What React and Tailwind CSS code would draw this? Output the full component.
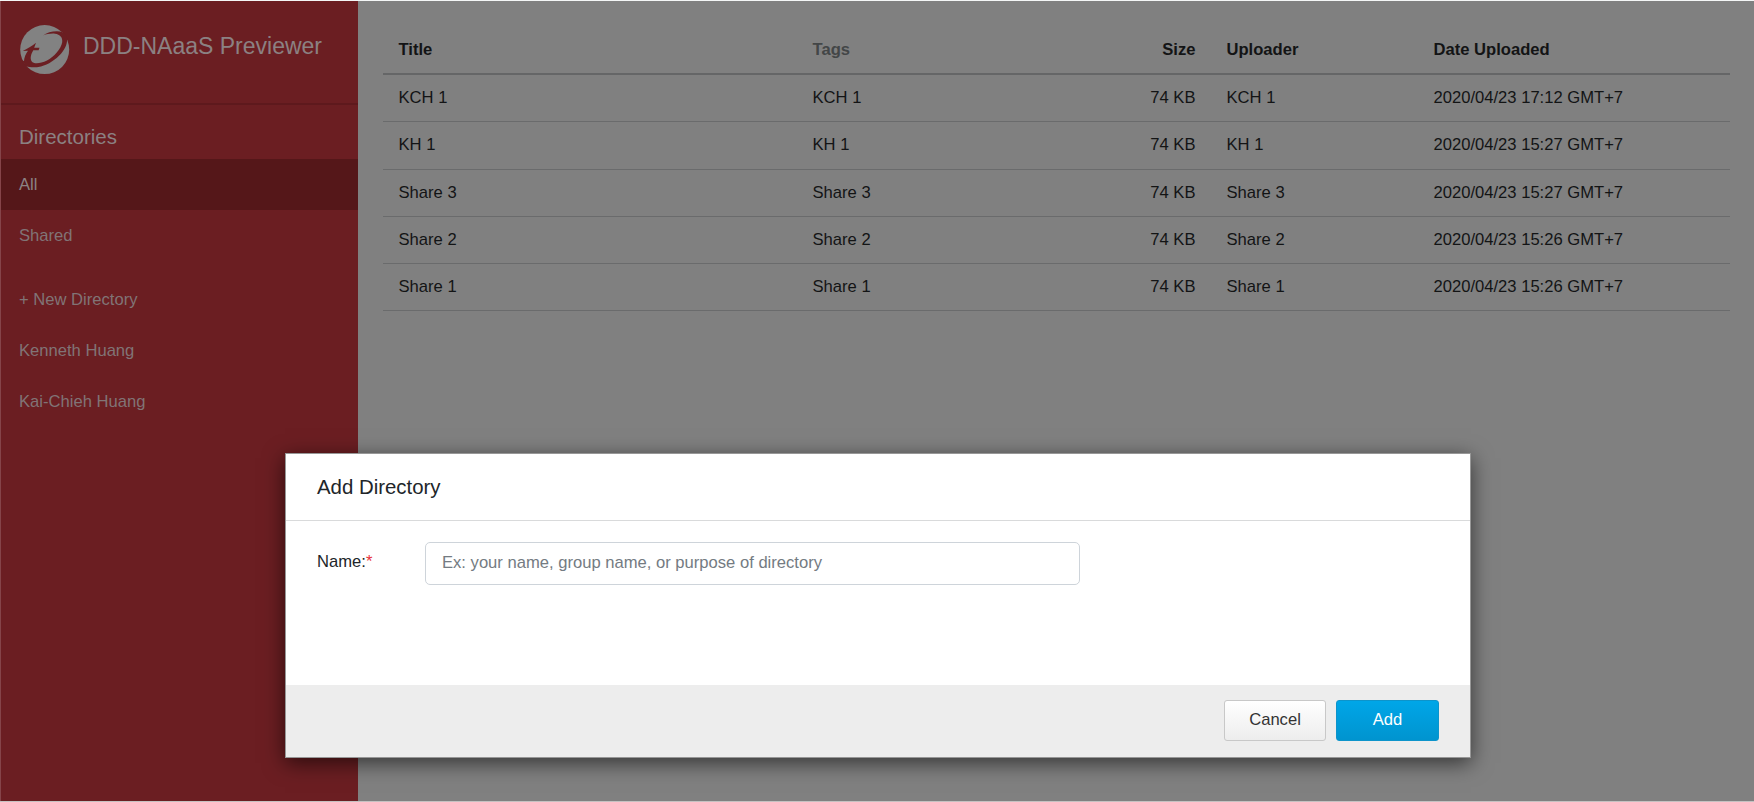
import React from "react";

const rows = [
  ["KCH 1", "2020/04/23 17:12 GMT+7"],
  ["KH 1", "2020/04/23 15:27 GMT+7"],
  ["Share 3", "2020/04/23 15:27 GMT+7"],
  ["Share 2", "2020/04/23 15:26 GMT+7"],
  ["Share 1", "2020/04/23 15:26 GMT+7"],
];

const grid = "grid grid-cols-[414px_207px_207px_207px_1fr]";

function Logo() {
  return (
    <svg className="h-[51px] w-[50px] shrink-0" viewBox="0 0 50 51">
      <circle cx="24.7" cy="25.6" r="24.5" fill="#828282" />
      <path
        d="M22.8 11.4C28 8 36.5 6.2 42.5 8.2L45.5 10.5L46.8 12.5C48 18.5 45.5 24.5 41.2 29.5C35.5 35.8 28.5 40.5 21 42.4C15 43.8 10 43.4 6.5 42.5L1.5 36.5L4 37C4.2 33.5 5.6 30 8 26.7L2.8 27C8 24.3 12.3 22 16 18.8L14.2 23.8H19.5L18.6 26.3H13.3C11.1 30 9.8 34.2 11.6 37.2C13.7 40.2 20 39.8 27 36.5C34 32.7 41 25 42.2 18.2C42.9 13.2 40 10.4 35 9.7C31 9.3 26.5 10.2 22.8 11.4Z"
        fill="#6b1e22"
      />
    </svg>
  );
}

function SideItem({ children, active }) {
  return (
    <div className={"flex h-[51px] items-center pt-[2px] pl-[18px] " + (active ? "bg-[#551719] text-[#8c8384]" : "")}>
      {children}
    </div>
  );
}

function Sidebar() {
  return (
    <aside className="w-[358px] shrink-0 border-l border-[#854449] bg-[#6b1e22] text-[16.6px] text-[#817476]">
      <div className="flex h-[104px] gap-[13px] border-b-2 border-[#5e191d] pt-[23px] pl-[19px]">
        <Logo />
        <h1 className="mt-[5px] text-[23px] leading-[34px] whitespace-nowrap text-[#8b8182]">DDD-NAaaS Previewer</h1>
      </div>
      <h2 className="h-[54px] pt-[16px] pl-[18px] text-[20.5px] leading-[32px] text-[#8b8182]">Directories</h2>
      <SideItem active>All</SideItem>
      <SideItem>Shared</SideItem>
      <div className="mt-[13px]">
        <SideItem>+ New Directory</SideItem>
        <SideItem>Kenneth Huang</SideItem>
        <SideItem>Kai-Chieh Huang</SideItem>
      </div>
    </aside>
  );
}

function FileTable() {
  return (
    <main className="grow pt-[24px] pr-[24px] pl-[25px] text-[16.6px] leading-[24px] text-[#131415]">
      <div className={grid + " h-[50px] items-center border-b-2 border-[#656667] pt-[1px] font-bold"}>
        <div className="pl-[15.5px]">Title</div>
        <div className="pl-[15.5px] text-[#434647]">Tags</div>
        <div className="pr-[15.5px] text-right">Size</div>
        <div className="pl-[15.5px]">Uploader</div>
        <div className="pl-[15.5px]">Date Uploaded</div>
      </div>
      {rows.map(([name, date]) => (
        <div key={name} className={grid + " h-[47.3px] items-center border-b border-[#6a6b6c]"}>
          <div className="pl-[15.5px]">{name}</div>
          <div className="pl-[15.5px]">{name}</div>
          <div className="pr-[15.5px] text-right">74 KB</div>
          <div className="pl-[15.5px]">{name}</div>
          <div className="pl-[15.5px]">{date}</div>
        </div>
      ))}
    </main>
  );
}

function AddDirectoryDialog() {
  return (
    <div
      role="dialog"
      className="absolute top-[452px] left-[285px] flex h-[305px] w-[1186px] flex-col border border-[#979797] bg-white text-[16.6px] text-[#212529] shadow-[0_5px_20px_rgba(0,0,0,0.6)]"
    >
      <div className="h-[67px] border-b border-[#d9dadb] pt-[17px] pl-[31px] text-[20.4px] leading-[32px]">
        Add Directory
      </div>
      <div className="flex grow pt-[21px] pl-[31px]">
        <label className="w-[108px] pt-[8px] leading-[24px]">
          Name:<span className="text-[#e8323c]">*</span>
        </label>
        <input
          className="h-[43px] w-[655px] rounded-[5px] border border-[#ced4da] px-[16px] pb-[2px] outline-none placeholder:text-[#747b82]"
          placeholder="Ex: your name, group name, or purpose of directory"
        />
      </div>
      <div className="flex h-[72px] justify-end gap-[10px] bg-[#ededed] pt-[15px] pr-[31px]">
        <button className="h-[41px] w-[102px] rounded-[3px] border border-[#c8c8c8] bg-linear-to-b from-white to-[#ededed] text-[#333333]">
          Cancel
        </button>
        <button className="h-[41px] w-[103px] rounded-[3px] border border-[#0d94cb] bg-linear-to-b from-[#00a6e8] to-[#0094cf] text-white">
          Add
        </button>
      </div>
    </div>
  );
}

export default function App() {
  return (
    <div className="relative flex h-[802px] w-[1754px] overflow-hidden border-t border-b border-t-[#f4f6f6] border-b-[#c5c2c2] bg-[#808080] font-['Liberation_Sans',Arial,sans-serif]">
      <Sidebar />
      <FileTable />
      <AddDirectoryDialog />
    </div>
  );
}
